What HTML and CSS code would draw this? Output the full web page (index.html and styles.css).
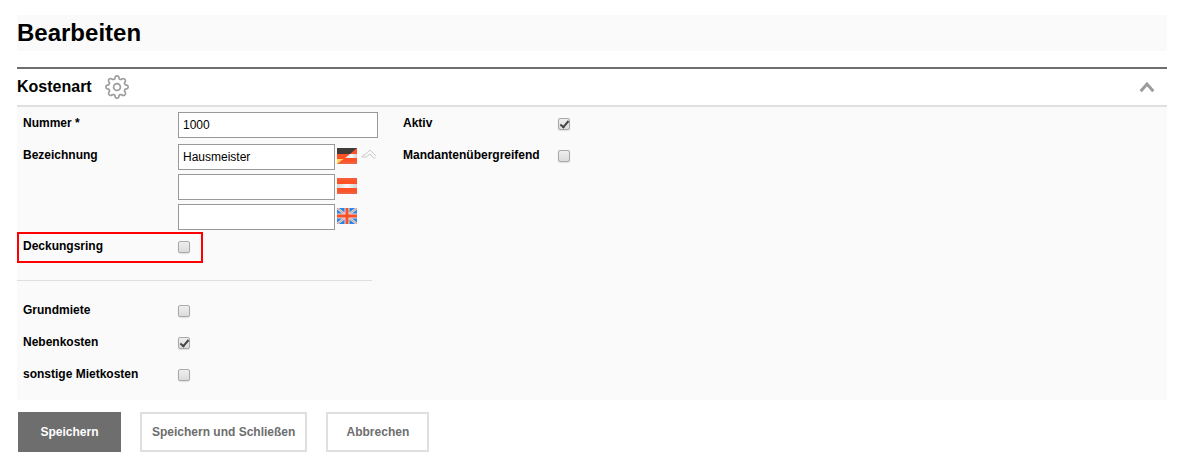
FILE: index.html
```html
<!DOCTYPE html>
<html lang="de">
<head>
	<meta charset="utf-8">
	<title>Kostenart bearbeiten</title>
	<link rel="stylesheet" href="styles.css">
</head>
<body>
	<h1>Bearbeiten</h1>
	<form>
		<div class="section-header">
			<h2>Kostenart</h2>
			<button type="button" class="icon-btn" aria-label="Einstellungen">
				<svg width="24" height="24" viewBox="0 0 24 24" fill="none" stroke="#9c9c9c" stroke-width="1.7" stroke-linejoin="round">
					<path d="M9.9 3.4 C10.2 1.2 10.5 .9 12 .9 S13.8 1.2 14.1 3.4 C14.4 4.3 15.8 4.8 16.6 4.3 C18.3 3 18.8 3.1 19.8 4.2 S21 5.7 19.7 7.4 C19.2 8.2 19.7 9.6 20.6 9.9 C22.8 10.2 23.1 10.5 23.1 12 S22.8 13.8 20.6 14.1 C19.7 14.4 19.2 15.8 19.7 16.6 C21 18.3 20.9 18.8 19.8 19.8 S18.3 21 16.6 19.7 C15.8 19.2 14.4 19.7 14.1 20.6 C13.8 22.8 13.5 23.1 12 23.1 S10.2 22.8 9.9 20.6 C9.6 19.7 8.2 19.2 7.4 19.7 C5.7 21 5.2 20.9 4.2 19.8 S3 18.3 4.3 16.6 C4.8 15.8 4.3 14.4 3.4 14.1 C1.2 13.8 .9 13.5 .9 12 S1.2 10.2 3.4 9.9 C4.3 9.6 4.8 8.2 4.3 7.4 C3 5.7 3.1 5.2 4.2 4.2 S5.7 3 7.4 4.3 C8.2 4.8 9.6 4.3 9.9 3.4 Z"/>
					<circle cx="12" cy="12" r="3.4"/>
				</svg>
			</button>
			<button type="button" class="icon-btn collapse-btn" aria-label="Zuklappen">
				<svg width="16" height="12" viewBox="0 0 16 12" fill="none" stroke="#9c9c9c" stroke-width="3">
					<path d="M1.7 10.2 L8 3 L14.3 10.2"/>
				</svg>
			</button>
		</div>

		<div class="section-body">
			<!-- left column -->
			<div class="column">
				<div class="row">
					<label for="nummer">Nummer *</label>
					<input type="text" id="nummer" class="wide" value="1000">
				</div>
				<div class="row">
					<label for="bezeichnung">Bezeichnung</label>
					<div class="languages">
						<div class="language">
							<input type="text" id="bezeichnung" value="Hausmeister">
							<svg class="flag" width="20" height="16" viewBox="0 0 20 16">
								<defs>
									<linearGradient id="red" x1="0" y1="0" x2="0" y2="1">
										<stop offset="0" stop-color="#f0603f"/>
										<stop offset=".2" stop-color="#ff5126"/>
										<stop offset=".8" stop-color="#ff5126"/>
										<stop offset="1" stop-color="#e8694c"/>
									</linearGradient>
									<linearGradient id="white" x1="0" y1="0" x2="1" y2="0">
										<stop offset="0" stop-color="#d6d6d6"/>
										<stop offset=".5" stop-color="#fafafa"/>
										<stop offset="1" stop-color="#d0d0d0"/>
									</linearGradient>
								</defs>
								<rect width="20" height="16" fill="url(#red)"/>
								<path d="M13 6 H20 V10 H8 Z" fill="url(#white)"/>
								<path d="M0 0 H20 L13 6 H0 Z" fill="#3f3b38"/>
								<path d="M0 11 H6.5 L0 16 Z" fill="#ffd65a"/>
							</svg>
							<button type="button" class="icon-btn" aria-label="Sprachen ausblenden">
								<svg width="16" height="10" viewBox="0 0 16 10" fill="none" stroke="#c9c9c9">
									<path d="M3 6.5 L9 1 L15 7"/>
									<path d="M3.5 5 L.8 8 H5.5 L9 5 L12.5 9 H14.5"/>
								</svg>
							</button>
						</div>
						<div class="language">
							<input type="text" aria-label="Bezeichnung (Österreich)">
							<svg class="flag" width="20" height="16" viewBox="0 0 20 16">
								<rect width="20" height="16" fill="url(#red)"/>
								<rect y="6" width="20" height="4" fill="url(#white)"/>
							</svg>
						</div>
						<div class="language">
							<input type="text" aria-label="Bezeichnung (Englisch)">
							<svg class="flag" width="20" height="16" viewBox="0 0 20 16">
								<rect width="20" height="16" fill="#2488e6"/>
								<path d="M0 0 L20 16 M20 0 L0 16" stroke="#e0dde4" stroke-width="2.4"/>
								<path d="M0 0 L20 16 M20 0 L0 16" stroke="#ee7a62" stroke-width=".8"/>
								<path d="M10 0 V16 M0 8 H20" stroke="#e6d6d6" stroke-width="5"/>
								<path d="M10 0 V16 M0 8 H20" stroke="#fa5228" stroke-width="3"/>
							</svg>
						</div>
					</div>
				</div>
				<div class="row highlight">
					<label for="deckungsring">Deckungsring</label>
					<input type="checkbox" id="deckungsring">
				</div>
				<hr>
				<div class="row">
					<label for="grundmiete">Grundmiete</label>
					<input type="checkbox" id="grundmiete">
				</div>
				<div class="row">
					<label for="nebenkosten">Nebenkosten</label>
					<input type="checkbox" id="nebenkosten" checked>
				</div>
				<div class="row">
					<label for="sonstige">sonstige Mietkosten</label>
					<input type="checkbox" id="sonstige">
				</div>
			</div>

			<!-- right column -->
			<div class="column">
				<div class="row">
					<label for="aktiv">Aktiv</label>
					<input type="checkbox" id="aktiv" checked>
				</div>
				<div class="row">
					<label for="mandanten">Mandantenübergreifend</label>
					<input type="checkbox" id="mandanten">
				</div>
			</div>
		</div>

		<div class="buttons">
			<button type="submit" class="btn primary">Speichern</button>
			<button type="submit" class="btn">Speichern und Schließen</button>
			<button type="button" class="btn">Abbrechen</button>
		</div>
	</form>
</body>
</html>
```
FILE: styles.css
```css
*, *::after {
	box-sizing: border-box;
}
body {
	margin: 0;
	padding: 15px 19px 10px 17px;
	background-color: white;
	color: black;
	font-family: "Liberation Sans", Arial, sans-serif;
	font-size: 12px;
}
h1 {
	margin: 0 0 16px;
	background-color: #fafafa;
	font-size: 24px;
	line-height: 36px;
}
h2 {
	margin: 0 13px 0 0;
	font-size: 16px;
	line-height: 20px;
}

.section-header {
	display: flex;
	align-items: center;
	height: 40px;
	padding-right: 12px;
	border-top: 2px solid #6e6e6e;
	border-bottom: 2px solid #dfdfdf;
}
.icon-btn {
	display: block;
	padding: 0;
	background: none;
	border: none;
	cursor: pointer;
}
.icon-btn svg {
	display: block;
}
.collapse-btn {
	margin-left: auto;
}

.section-body {
	display: flex;
	flex-wrap: wrap;
	padding-bottom: 10px;
	background-color: #fafafa;
}
.column {
	width: 380px;
}
.row {
	display: flex;
	align-items: flex-start;
	min-height: 32px;
	padding: 5px 0 0 6px;
}
.row label {
	width: 155px;
	font-weight: bold;
	line-height: 22px;
}
.highlight {
	position: relative;
}
.highlight::after {
	content: "";
	position: absolute;
	top: 2px;
	bottom: -1px;
	left: 0;
	width: 186px;
	border: 2px solid #f00;
	pointer-events: none;
}
hr {
	width: 355px;
	margin: 18px 0 13px;
	border: none;
	border-top: 1px solid #dfdfdf;
}

input[type="text"] {
	width: 157px;
	height: 26px;
	padding: 0 4px;
	background-color: white;
	border: 1px solid #999;
	color: black;
	font: inherit;
}
input[type="text"].wide {
	width: 200px;
}
input[type="checkbox"] {
	appearance: none;
	width: 12px;
	height: 12px;
	margin: 6px 0 0;
	background: linear-gradient(#eee, #dcdcdc);
	border: 1px solid #a8a8a8;
	border-radius: 2px;
	box-shadow: 0 1px 1px #e0e0e0;
}
input[type="checkbox"]:checked::after {
	content: "";
	display: block;
	width: 5px;
	height: 9px;
	margin: 0 0 0 3px;
	border: solid #444;
	border-width: 0 2px 2px 0;
	transform: rotate(40deg);
}

.languages {
	display: flex;
	flex-direction: column;
	gap: 4px;
}
.language {
	display: flex;
	align-items: center;
}
.flag {
	margin: 0 4px 2px 2px;
}
.language .icon-btn {
	margin-bottom: 6px;
}

.buttons {
	display: flex;
	flex-wrap: wrap;
	gap: 19px;
	margin: 12px 0 0 1px;
}
.btn {
	min-width: 103px;
	height: 40px;
	padding: 0 10px;
	background-color: white;
	border: 2px solid #dfdfdf;
	color: #6e6e6e;
	font: inherit;
	font-weight: bold;
	cursor: pointer;
}
.btn.primary {
	background-color: #6e6e6e;
	border-color: #6e6e6e;
	color: white;
}
```
